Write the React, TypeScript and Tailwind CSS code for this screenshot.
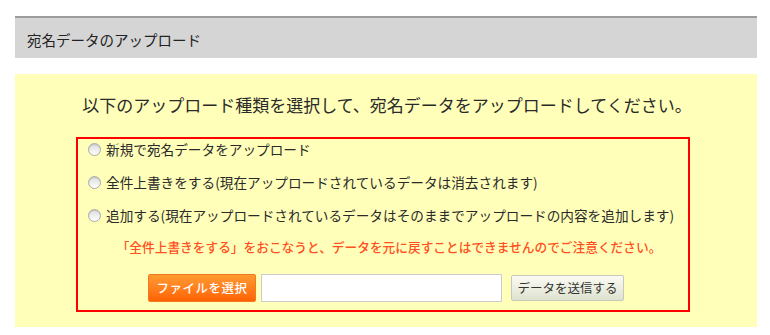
import { useState } from "react";

const options = [
  "新規で宛名データをアップロード",
  "全件上書きをする(現在アップロードされているデータは消去されます)",
  "追加する(現在アップロードされているデータはそのままでアップロードの内容を追加します)",
];

export default function App() {
  const [selected, setSelected] = useState<number | null>(null);

  return (
    <div
      className="w-[770px] h-[335px] bg-white px-[15px] pt-[16px] text-[#2a2a2a]"
      style={{ fontFamily: '"Noto Sans CJK JP", "Noto Sans", sans-serif' }}
    >
      {/* Section header */}
      <div className="w-[742px] h-[42px] border-t-2 border-[#9c9c9c] bg-[#d5d5d5] pl-[12px] flex items-center">
        <h2 className="text-[14.5px] leading-[20px] text-[#222] pt-[3px]">宛名データのアップロード</h2>
      </div>

      {/* Upload panel */}
      <div className="mt-[16px] w-[742px] h-[253px] bg-[#ffffb9] pt-[19px]">
        <p className="text-center text-[17px] leading-[24px] text-[#2a2a2a] pl-[2px]">
          以下のアップロード種類を選択して、宛名データをアップロードしてください。
        </p>

        <div className="mt-[20px] ml-[61px] w-[614px] h-[175px] border-2 border-[#ff0000] pl-[10px]">
          <div className="flex flex-col gap-[13px]">
            {options.map((label, i) => (
              <label key={i} className="h-[20px] flex items-center gap-[5px] cursor-pointer">
                <span
                  onClick={() => setSelected(i)}
                  className="w-[13px] h-[13px] rounded-full border border-[#a9a9a9] bg-gradient-to-b from-[#dcdcdc] to-white flex items-center justify-center shadow-[inset_0_1px_1px_rgba(0,0,0,0.12)]"
                >
                  {selected === i && <span className="w-[5px] h-[5px] rounded-full bg-[#333]" />}
                </span>
                <span className="text-[13.65px] leading-[20px] text-[#2a2a2a]">{label}</span>
              </label>
            ))}
          </div>

          <p className="mt-[12px] h-[20px] text-center text-[12.7px] leading-[20px] font-medium text-[#ff5022] pl-[2px]">
            「全件上書きをする」をおこなうと、データを元に戻すことはできませんのでご注意ください。
          </p>

          <div className="mt-[17px] flex items-center pl-[60px]">
            <button className="w-[108px] h-[28px] rounded-[2px] border border-[#f07a20] bg-gradient-to-b from-[#ff9b30] to-[#ff6100] text-white text-[12.5px] font-medium tracking-[0.5px] leading-none">
              ファイルを選択
            </button>
            <input
              type="text"
              className="ml-[5px] w-[241px] h-[28px] bg-white border border-[#cccccc] outline-none px-2 text-[13px]"
            />
            <button className="ml-[9px] w-[113px] h-[26px] rounded-[2px] border border-[#c6c8bc] bg-gradient-to-b from-[#fbfbf4] to-[#dfe2cf] text-[#333] text-[12.5px] leading-none">
              データを送信する
            </button>
          </div>
        </div>
      </div>
    </div>
  );
}
